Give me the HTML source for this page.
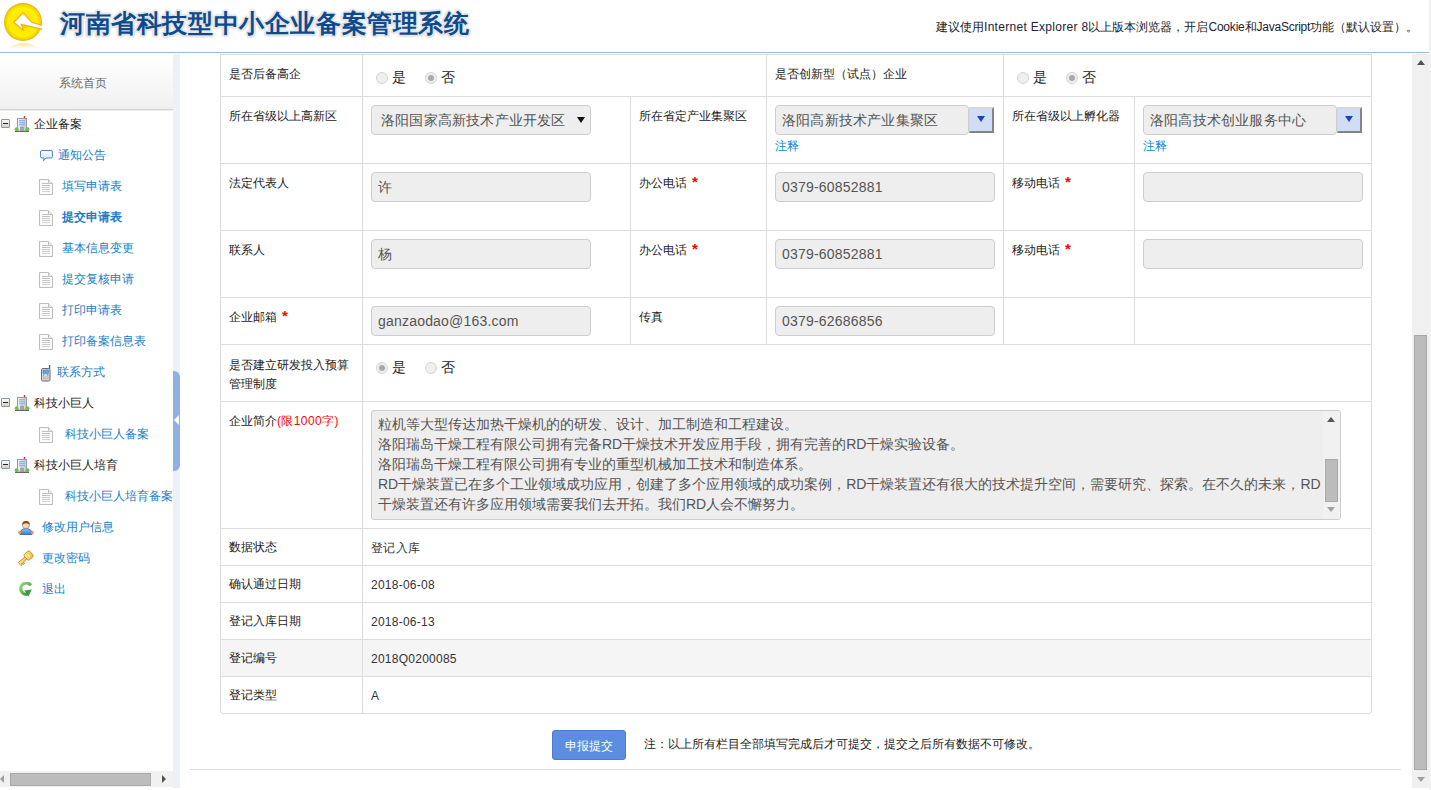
<!DOCTYPE html><html><head><meta charset="utf-8"><style>
*{margin:0;padding:0;box-sizing:border-box}
html,body{width:1431px;height:790px;overflow:hidden;background:#fff;font-family:"Liberation Sans",sans-serif;font-size:12px;color:#222}
.a{position:absolute;white-space:nowrap}
.hl{position:absolute;height:1px;background:#dcdcdc}
.vl{position:absolute;width:1px;background:#dcdcdc}
.lbl{position:absolute;white-space:nowrap;font-size:12px;color:#222;line-height:14px}
.inp{position:absolute;width:220px;height:30px;background:#eee;border:1px solid #cdcdcd;border-radius:4px;font-size:14px;color:#555;line-height:28px;padding-left:6px;white-space:nowrap;overflow:hidden;letter-spacing:.2px}
.req{color:#f00;margin-left:5px;font-size:15px;line-height:0;position:relative;top:0;font-weight:bold}
.radio{position:absolute;width:12px;height:12px;border-radius:50%;border:1px solid #d4d4d4;background:#efefef}
.radio.on:after{content:"";position:absolute;left:2px;top:2px;width:6px;height:6px;border-radius:50%;background:#a9a9a9}
.rt{position:absolute;font-size:14px;color:#222;line-height:14px;white-space:nowrap;margin-left:1px}
.ddb{position:absolute;width:25px;height:26px;background:#cfdef6;border-right:2px solid #858585;border-bottom:2px solid #858585;border-top:2px solid #d8d8d8;border-left:1px solid #d8d8d8}
.ddb:after{content:"";position:absolute;left:7px;top:7px;border-left:4px solid transparent;border-right:4px solid transparent;border-top:6px solid #1c44b4}
.note{position:absolute;color:#1a88cc;font-size:12px;line-height:14px;white-space:nowrap}
.nav{position:absolute;white-space:nowrap;color:#1a7ec8;font-size:12px;line-height:14px}
.tree{position:absolute;white-space:nowrap;color:#222;font-size:12px;line-height:14px}
.val{position:absolute;white-space:nowrap;font-size:12px;color:#333;line-height:14px;letter-spacing:.25px}
</style></head><body>
<svg class="a" style="left:0;top:0" width="52" height="52" viewBox="0 0 52 52">
<defs>
<radialGradient id="lg" cx="0.5" cy="0.5" r="0.5"><stop offset="0" stop-color="#f0b800"/><stop offset="0.45" stop-color="#ffe800"/><stop offset="0.75" stop-color="#fff000"/><stop offset="0.92" stop-color="#f2d000"/><stop offset="1" stop-color="#e0b000"/></radialGradient>
<linearGradient id="rf" x1="0" y1="0" x2="0" y2="1"><stop offset="0" stop-color="#f3e08a"/><stop offset="1" stop-color="#fffbe8"/></linearGradient>
</defs>
<path d="M9 48 Q23 38 38 48 Z" fill="url(#rf)" opacity="0.8"/>
<circle cx="23" cy="22" r="19" fill="url(#lg)"/>
<path d="M23 12.9 L31.7 22.3 L43 25.7 L43 29.4 L21.2 24.4 L23.7 30.6 L13.9 22.3 Z" fill="#fff" stroke="#f0a000" stroke-width="1.2" stroke-opacity="0.8"/>
<rect x="42.2" y="20" width="3" height="12" fill="#fff"/>
</svg>
<div class="a" style="left:60px;top:8px;font-size:25px;font-weight:bold;color:#0d4b90;line-height:30px;letter-spacing:0.6px;text-shadow:2px 0 1px #e6e6e6,-2px 0 1px #e6e6e6,0 2px 1px #e6e6e6,0 -2px 1px #e6e6e6,1.5px 1.5px 1px #e6e6e6,-1.5px -1.5px 1px #e6e6e6,1.5px -1.5px 1px #e6e6e6,-1.5px 1.5px 1px #e6e6e6">河南省科技型中小企业备案管理系统</div>
<div class="a" style="left:936px;top:20px;font-size:12px;color:#222;line-height:14px">建议使用<span style="letter-spacing:.3px;color:#223">Internet Explorer 8</span>以上版本浏览器，开启<span style="letter-spacing:-.2px;color:#223">Cookie</span>和<span style="letter-spacing:-.25px;color:#223">JavaScript</span>功能（默认设置）。</div>
<div class="a" style="left:0;top:52px;width:1431px;height:1px;background:#9dbde0"></div>
<div class="a" style="left:0;top:58px;width:173px;height:52px;background:linear-gradient(#ffffff,#f0f0f0);border-bottom:1px solid #d2d2d2;box-shadow:0 1px 0 #ececec"></div>
<div class="a" style="left:59px;top:76px;font-size:12px;color:#6a6a6a;line-height:14px">系统首页</div>
<div class="a" style="left:173px;top:54px;width:7px;height:734px;background:#edf0f5"></div>
<div class="a" style="left:173px;top:371px;width:7px;height:100px;background:#8eb0e2;border-radius:0 6px 6px 0"></div>
<div class="a" style="left:174px;top:415px;width:0;height:0;border-top:5px solid transparent;border-bottom:5px solid transparent;border-right:5px solid #fff"></div>
<div class="a" style="left:1px;top:119px;width:9px;height:9px;border:1px solid #7a9cc4;background:linear-gradient(#fbfaf6,#d8cfbe);border-radius:1px"><div class="a" style="left:1px;top:3px;width:5px;height:1px;background:#222"></div></div>
<svg class="a" style="left:14px;top:116px" width="16" height="16" viewBox="0 0 16 16">
<defs><linearGradient id="bg116" x1="0" x2="1"><stop offset="0" stop-color="#f4f4f4"/><stop offset="1" stop-color="#c8c8c8"/></linearGradient></defs>
<rect x="10" y="0.5" width="0.9" height="2.5" fill="#777"/><circle cx="10.5" cy="1" r="0.9" fill="#e22"/>
<rect x="3.5" y="2.5" width="9" height="12.5" fill="url(#bg116)" stroke="#9a9a9a"/>
<rect x="5" y="4.2" width="6" height="1.1" fill="#7eaee8"/><rect x="5" y="6.2" width="6" height="1.1" fill="#7eaee8"/><rect x="5" y="8.2" width="6" height="1.1" fill="#7eaee8"/>
<rect x="6.5" y="11" width="3" height="4" fill="#a8a8a8" stroke="#888" stroke-width="0.5"/>
<circle cx="2.6" cy="13.2" r="2" fill="#6cc050"/><circle cx="13.4" cy="13.2" r="2" fill="#6cc050"/>
<rect x="1" y="15" width="14" height="1" fill="#606860"/>
</svg>
<div class="tree" style="left:34px;top:117px">企业备案</div>
<svg class="a" style="left:40px;top:150px" width="13" height="12" viewBox="0 0 13 12"><defs><linearGradient id="sb" x1="0" y1="0" x2="0" y2="1"><stop offset="0" stop-color="#fff"/><stop offset="1" stop-color="#cfe0f8"/></linearGradient></defs><path d="M2 0.5 H11 Q12.5 0.5 12.5 2 V6.5 Q12.5 8 11 8 H6 L3.5 10.8 L4 8 H2 Q0.5 8 0.5 6.5 V2 Q0.5 0.5 2 0.5Z" fill="url(#sb)" stroke="#4f86c6"/></svg>
<div class="nav" style="left:58px;top:148px">通知公告</div>
<svg class="a" style="left:39px;top:179px" width="14" height="16" viewBox="0 0 14 16">
<path d="M0.5 0.5 H9.5 L13.5 4.5 V15.5 H0.5 Z" fill="#fafafa" stroke="#bdbdbd"/>
<path d="M9.5 0.5 V4.5 H13.5" fill="#eee" stroke="#bdbdbd"/>
<rect x="3" y="4" width="6" height="0.9" fill="#b8b8b8"/><rect x="3" y="6" width="8" height="0.9" fill="#b8b8b8"/><rect x="3" y="8" width="8" height="0.9" fill="#c4c4c4"/><rect x="3" y="10" width="8" height="0.9" fill="#c4c4c4"/><rect x="3" y="12" width="8" height="0.9" fill="#d0d0d0"/>
</svg>
<div class="nav" style="left:62px;top:179px;">填写申请表</div>
<svg class="a" style="left:39px;top:210px" width="14" height="16" viewBox="0 0 14 16">
<path d="M0.5 0.5 H9.5 L13.5 4.5 V15.5 H0.5 Z" fill="#fafafa" stroke="#bdbdbd"/>
<path d="M9.5 0.5 V4.5 H13.5" fill="#eee" stroke="#bdbdbd"/>
<rect x="3" y="4" width="6" height="0.9" fill="#b8b8b8"/><rect x="3" y="6" width="8" height="0.9" fill="#b8b8b8"/><rect x="3" y="8" width="8" height="0.9" fill="#c4c4c4"/><rect x="3" y="10" width="8" height="0.9" fill="#c4c4c4"/><rect x="3" y="12" width="8" height="0.9" fill="#d0d0d0"/>
</svg>
<div class="nav" style="left:62px;top:210px;font-weight:bold">提交申请表</div>
<svg class="a" style="left:39px;top:241px" width="14" height="16" viewBox="0 0 14 16">
<path d="M0.5 0.5 H9.5 L13.5 4.5 V15.5 H0.5 Z" fill="#fafafa" stroke="#bdbdbd"/>
<path d="M9.5 0.5 V4.5 H13.5" fill="#eee" stroke="#bdbdbd"/>
<rect x="3" y="4" width="6" height="0.9" fill="#b8b8b8"/><rect x="3" y="6" width="8" height="0.9" fill="#b8b8b8"/><rect x="3" y="8" width="8" height="0.9" fill="#c4c4c4"/><rect x="3" y="10" width="8" height="0.9" fill="#c4c4c4"/><rect x="3" y="12" width="8" height="0.9" fill="#d0d0d0"/>
</svg>
<div class="nav" style="left:62px;top:241px;">基本信息变更</div>
<svg class="a" style="left:39px;top:272px" width="14" height="16" viewBox="0 0 14 16">
<path d="M0.5 0.5 H9.5 L13.5 4.5 V15.5 H0.5 Z" fill="#fafafa" stroke="#bdbdbd"/>
<path d="M9.5 0.5 V4.5 H13.5" fill="#eee" stroke="#bdbdbd"/>
<rect x="3" y="4" width="6" height="0.9" fill="#b8b8b8"/><rect x="3" y="6" width="8" height="0.9" fill="#b8b8b8"/><rect x="3" y="8" width="8" height="0.9" fill="#c4c4c4"/><rect x="3" y="10" width="8" height="0.9" fill="#c4c4c4"/><rect x="3" y="12" width="8" height="0.9" fill="#d0d0d0"/>
</svg>
<div class="nav" style="left:62px;top:272px;">提交复核申请</div>
<svg class="a" style="left:39px;top:303px" width="14" height="16" viewBox="0 0 14 16">
<path d="M0.5 0.5 H9.5 L13.5 4.5 V15.5 H0.5 Z" fill="#fafafa" stroke="#bdbdbd"/>
<path d="M9.5 0.5 V4.5 H13.5" fill="#eee" stroke="#bdbdbd"/>
<rect x="3" y="4" width="6" height="0.9" fill="#b8b8b8"/><rect x="3" y="6" width="8" height="0.9" fill="#b8b8b8"/><rect x="3" y="8" width="8" height="0.9" fill="#c4c4c4"/><rect x="3" y="10" width="8" height="0.9" fill="#c4c4c4"/><rect x="3" y="12" width="8" height="0.9" fill="#d0d0d0"/>
</svg>
<div class="nav" style="left:62px;top:303px;">打印申请表</div>
<svg class="a" style="left:39px;top:334px" width="14" height="16" viewBox="0 0 14 16">
<path d="M0.5 0.5 H9.5 L13.5 4.5 V15.5 H0.5 Z" fill="#fafafa" stroke="#bdbdbd"/>
<path d="M9.5 0.5 V4.5 H13.5" fill="#eee" stroke="#bdbdbd"/>
<rect x="3" y="4" width="6" height="0.9" fill="#b8b8b8"/><rect x="3" y="6" width="8" height="0.9" fill="#b8b8b8"/><rect x="3" y="8" width="8" height="0.9" fill="#c4c4c4"/><rect x="3" y="10" width="8" height="0.9" fill="#c4c4c4"/><rect x="3" y="12" width="8" height="0.9" fill="#d0d0d0"/>
</svg>
<div class="nav" style="left:62px;top:334px;">打印备案信息表</div>
<svg class="a" style="left:41px;top:365px" width="10" height="17" viewBox="0 0 10 17"><rect x="8" y="0" width="1.2" height="4" fill="#555"/><rect x="0.5" y="3.5" width="8.5" height="12.5" rx="1.2" fill="#dcdcdc" stroke="#6a6a6a"/><rect x="2" y="5" width="5.5" height="3.5" fill="#5aa8f0" stroke="#3a70b0" stroke-width="0.5"/><rect x="2" y="9.5" width="1.5" height="1" fill="#4a4"/><rect x="6" y="9.5" width="1.5" height="1" fill="#e44"/><g fill="#999"><rect x="2" y="11.5" width="1.2" height="1"/><rect x="4.2" y="11.5" width="1.2" height="1"/><rect x="6.3" y="11.5" width="1.2" height="1"/><rect x="2" y="13.3" width="1.2" height="1"/><rect x="4.2" y="13.3" width="1.2" height="1"/><rect x="6.3" y="13.3" width="1.2" height="1"/></g></svg>
<div class="nav" style="left:57px;top:365px">联系方式</div>
<div class="a" style="left:1px;top:398px;width:9px;height:9px;border:1px solid #7a9cc4;background:linear-gradient(#fbfaf6,#d8cfbe);border-radius:1px"><div class="a" style="left:1px;top:3px;width:5px;height:1px;background:#222"></div></div>
<svg class="a" style="left:14px;top:395px" width="16" height="16" viewBox="0 0 16 16">
<defs><linearGradient id="bg395" x1="0" x2="1"><stop offset="0" stop-color="#f4f4f4"/><stop offset="1" stop-color="#c8c8c8"/></linearGradient></defs>
<rect x="10" y="0.5" width="0.9" height="2.5" fill="#777"/><circle cx="10.5" cy="1" r="0.9" fill="#e22"/>
<rect x="3.5" y="2.5" width="9" height="12.5" fill="url(#bg395)" stroke="#9a9a9a"/>
<rect x="5" y="4.2" width="6" height="1.1" fill="#7eaee8"/><rect x="5" y="6.2" width="6" height="1.1" fill="#7eaee8"/><rect x="5" y="8.2" width="6" height="1.1" fill="#7eaee8"/>
<rect x="6.5" y="11" width="3" height="4" fill="#a8a8a8" stroke="#888" stroke-width="0.5"/>
<circle cx="2.6" cy="13.2" r="2" fill="#6cc050"/><circle cx="13.4" cy="13.2" r="2" fill="#6cc050"/>
<rect x="1" y="15" width="14" height="1" fill="#606860"/>
</svg>
<div class="tree" style="left:34px;top:396px">科技小巨人</div>
<svg class="a" style="left:39px;top:427px" width="14" height="16" viewBox="0 0 14 16">
<path d="M0.5 0.5 H9.5 L13.5 4.5 V15.5 H0.5 Z" fill="#fafafa" stroke="#bdbdbd"/>
<path d="M9.5 0.5 V4.5 H13.5" fill="#eee" stroke="#bdbdbd"/>
<rect x="3" y="4" width="6" height="0.9" fill="#b8b8b8"/><rect x="3" y="6" width="8" height="0.9" fill="#b8b8b8"/><rect x="3" y="8" width="8" height="0.9" fill="#c4c4c4"/><rect x="3" y="10" width="8" height="0.9" fill="#c4c4c4"/><rect x="3" y="12" width="8" height="0.9" fill="#d0d0d0"/>
</svg>
<div class="nav" style="left:65px;top:427px">科技小巨人备案</div>
<div class="a" style="left:1px;top:460px;width:9px;height:9px;border:1px solid #7a9cc4;background:linear-gradient(#fbfaf6,#d8cfbe);border-radius:1px"><div class="a" style="left:1px;top:3px;width:5px;height:1px;background:#222"></div></div>
<svg class="a" style="left:14px;top:457px" width="16" height="16" viewBox="0 0 16 16">
<defs><linearGradient id="bg457" x1="0" x2="1"><stop offset="0" stop-color="#f4f4f4"/><stop offset="1" stop-color="#c8c8c8"/></linearGradient></defs>
<rect x="10" y="0.5" width="0.9" height="2.5" fill="#777"/><circle cx="10.5" cy="1" r="0.9" fill="#e22"/>
<rect x="3.5" y="2.5" width="9" height="12.5" fill="url(#bg457)" stroke="#9a9a9a"/>
<rect x="5" y="4.2" width="6" height="1.1" fill="#7eaee8"/><rect x="5" y="6.2" width="6" height="1.1" fill="#7eaee8"/><rect x="5" y="8.2" width="6" height="1.1" fill="#7eaee8"/>
<rect x="6.5" y="11" width="3" height="4" fill="#a8a8a8" stroke="#888" stroke-width="0.5"/>
<circle cx="2.6" cy="13.2" r="2" fill="#6cc050"/><circle cx="13.4" cy="13.2" r="2" fill="#6cc050"/>
<rect x="1" y="15" width="14" height="1" fill="#606860"/>
</svg>
<div class="tree" style="left:34px;top:458px">科技小巨人培育</div>
<svg class="a" style="left:39px;top:489px" width="14" height="16" viewBox="0 0 14 16">
<path d="M0.5 0.5 H9.5 L13.5 4.5 V15.5 H0.5 Z" fill="#fafafa" stroke="#bdbdbd"/>
<path d="M9.5 0.5 V4.5 H13.5" fill="#eee" stroke="#bdbdbd"/>
<rect x="3" y="4" width="6" height="0.9" fill="#b8b8b8"/><rect x="3" y="6" width="8" height="0.9" fill="#b8b8b8"/><rect x="3" y="8" width="8" height="0.9" fill="#c4c4c4"/><rect x="3" y="10" width="8" height="0.9" fill="#c4c4c4"/><rect x="3" y="12" width="8" height="0.9" fill="#d0d0d0"/>
</svg>
<div class="nav" style="left:65px;top:489px">科技小巨人培育备案</div>
<svg class="a" style="left:18px;top:520px" width="16" height="16" viewBox="0 0 16 16"><defs><linearGradient id="ub" x1="0" y1="0" x2="0" y2="1"><stop offset="0" stop-color="#8cc4ff"/><stop offset="1" stop-color="#2f7ae0"/></linearGradient></defs><path d="M2 14.5 Q2 8.5 8 8.5 Q14 8.5 14 14.5 Z" fill="url(#ub)" stroke="#2a5fb0" stroke-width="0.8"/><circle cx="1.9" cy="12.6" r="1.4" fill="#f0a860" stroke="#c07020" stroke-width="0.5"/><circle cx="14.1" cy="12.6" r="1.4" fill="#f0a860" stroke="#c07020" stroke-width="0.5"/><circle cx="8" cy="5" r="3.6" fill="#f7d7b8" stroke="#b07040" stroke-width="0.6"/><path d="M4.3 5 Q4 1 8 1 Q12 1 11.7 5 Q10.5 3.2 8 3.2 Q5.5 3.2 4.3 5Z" fill="#8a4a1a"/></svg>
<div class="nav" style="left:42px;top:520px">修改用户信息</div>
<svg class="a" style="left:17px;top:550px" width="17" height="17" viewBox="0 0 17 17"><defs><linearGradient id="kg" x1="0" y1="0" x2="1" y2="1"><stop offset="0" stop-color="#fff6b0"/><stop offset="1" stop-color="#e8b830"/></linearGradient></defs><g transform="rotate(-40 8.5 8.5)"><rect x="9" y="4.5" width="7.5" height="7.5" rx="1.8" fill="url(#kg)" stroke="#c88a20" stroke-width="0.9"/><rect x="11.5" y="6.3" width="2.5" height="4" rx="0.5" fill="#fff3b0" stroke="#d8a030" stroke-width="0.4"/><path d="M0.5 7 H9 V9.8 H4.5 V11.8 H3 V9.8 H2 V11 H0.5 Z" fill="url(#kg)" stroke="#c88a20" stroke-width="0.9"/></g></svg>
<div class="nav" style="left:42px;top:551px">更改密码</div>
<svg class="a" style="left:19px;top:582px" width="14" height="15" viewBox="0 0 14 15"><defs><linearGradient id="rg" x1="0" y1="0" x2="1" y2="1"><stop offset="0" stop-color="#9adc7a"/><stop offset="1" stop-color="#2e8a3a"/></linearGradient></defs><path d="M11.8 3.2 A5.6 5.6 0 1 0 9.5 11.8" fill="none" stroke="url(#rg)" stroke-width="3.2"/><path d="M5.5 8.5 L12.8 7.5 L9.5 14.5 Z" fill="#3a9a40"/><circle cx="7" cy="7" r="1.5" fill="#fff" opacity="0"/></svg>
<div class="nav" style="left:42px;top:582px">退出</div>
<div class="a" style="left:0;top:771px;width:173px;height:16px;background:#f1f1f1"></div>
<div class="a" style="left:10px;top:773px;width:141px;height:13px;background:#bcbcbc;border:1px solid #a8a8a8"></div>
<div class="a" style="left:0;top:775px;width:0;height:0;border-top:4px solid transparent;border-bottom:4px solid transparent;border-right:4px solid #a0a0a0"></div>
<div class="a" style="left:162px;top:775px;width:0;height:0;border-top:4px solid transparent;border-bottom:4px solid transparent;border-left:4px solid #505050"></div>
<div class="a" style="left:220px;top:639px;width:1151px;height:37px;background:#f5f5f5"></div>
<div class="hl" style="left:220px;top:54px;width:1152px"></div>
<div class="hl" style="left:220px;top:96px;width:1152px"></div>
<div class="hl" style="left:220px;top:163px;width:1152px"></div>
<div class="hl" style="left:220px;top:230px;width:1152px"></div>
<div class="hl" style="left:220px;top:297px;width:1152px"></div>
<div class="hl" style="left:220px;top:344px;width:1152px"></div>
<div class="hl" style="left:220px;top:401px;width:1152px"></div>
<div class="hl" style="left:220px;top:528px;width:1152px"></div>
<div class="hl" style="left:220px;top:565px;width:1152px"></div>
<div class="hl" style="left:220px;top:602px;width:1152px"></div>
<div class="hl" style="left:220px;top:639px;width:1152px"></div>
<div class="hl" style="left:220px;top:676px;width:1152px"></div>
<div class="a" style="left:220px;top:676px;width:1152px;height:38px;border:1px solid #dcdcdc;border-top:none;border-radius:0 0 4px 4px"></div>
<div class="vl" style="left:220px;top:54px;height:622px"></div>
<div class="vl" style="left:1371px;top:54px;height:622px"></div>
<div class="vl" style="left:362px;top:54px;height:659px"></div>
<div class="vl" style="left:630px;top:96px;height:248px"></div>
<div class="vl" style="left:766px;top:54px;height:290px"></div>
<div class="vl" style="left:1003px;top:54px;height:290px"></div>
<div class="vl" style="left:1134px;top:96px;height:248px"></div>
<div class="lbl" style="left:229px;top:67px">是否后备高企</div>
<div class="radio" style="left:376px;top:72px"></div><div class="rt" style="left:391px;top:70px">是</div>
<div class="radio on" style="left:425px;top:72px"></div><div class="rt" style="left:440px;top:70px">否</div>
<div class="lbl" style="left:775px;top:67px">是否创新型（试点）企业</div>
<div class="radio" style="left:1017px;top:72px"></div><div class="rt" style="left:1032px;top:70px">是</div>
<div class="radio on" style="left:1066px;top:72px"></div><div class="rt" style="left:1081px;top:70px">否</div>
<div class="lbl" style="left:229px;top:109px">所在省级以上高新区</div>
<div class="inp" style="left:371px;top:105px;padding-left:9px">洛阳国家高新技术产业开发区</div>
<div class="a" style="left:577px;top:117px;width:0;height:0;border-left:4px solid transparent;border-right:4px solid transparent;border-top:6px solid #111"></div>
<div class="lbl" style="left:639px;top:109px">所在省定产业集聚区</div>
<div class="inp" style="left:775px;top:105px;width:194px;border-radius:4px">洛阳高新技术产业集聚区</div>
<div class="ddb" style="left:969px;top:107px"></div>
<div class="note" style="left:775px;top:139px">注释</div>
<div class="lbl" style="left:1012px;top:109px">所在省级以上孵化器</div>
<div class="inp" style="left:1143px;top:105px;width:194px">洛阳高技术创业服务中心</div>
<div class="ddb" style="left:1337px;top:107px"></div>
<div class="note" style="left:1143px;top:139px">注释</div>
<div class="lbl" style="left:229px;top:176px">法定代表人</div>
<div class="inp" style="left:371px;top:172px">许</div>
<div class="lbl" style="left:639px;top:176px">办公电话<span class="req">*</span></div>
<div class="inp" style="left:775px;top:172px">0379-60852881</div>
<div class="lbl" style="left:1012px;top:176px">移动电话<span class="req">*</span></div>
<div class="inp" style="left:1143px;top:172px"></div>
<div class="lbl" style="left:229px;top:243px">联系人</div>
<div class="inp" style="left:371px;top:239px">杨</div>
<div class="lbl" style="left:639px;top:243px">办公电话<span class="req">*</span></div>
<div class="inp" style="left:775px;top:239px">0379-60852881</div>
<div class="lbl" style="left:1012px;top:243px">移动电话<span class="req">*</span></div>
<div class="inp" style="left:1143px;top:239px"></div>
<div class="lbl" style="left:229px;top:310px">企业邮箱<span class="req">*</span></div>
<div class="inp" style="left:371px;top:306px">ganzaodao@163.com</div>
<div class="lbl" style="left:639px;top:310px">传真</div>
<div class="inp" style="left:775px;top:306px">0379-62686856</div>
<div class="lbl" style="left:229px;top:356px;line-height:19px">是否建立研发投入预算<br>管理制度</div>
<div class="radio on" style="left:376px;top:362px"></div><div class="rt" style="left:391px;top:360px">是</div>
<div class="radio" style="left:425px;top:362px"></div><div class="rt" style="left:440px;top:360px">否</div>
<div class="lbl" style="left:229px;top:414px">企业简介<span style="color:#f00;letter-spacing:.4px">(限1000字)</span></div>
<div class="a" style="left:371px;top:410px;width:970px;height:110px;background:#eee;border:1px solid #cdcdcd;border-radius:3px;overflow:hidden">
<div class="a" style="left:6px;top:3px;font-size:14px;line-height:20px;color:#555">粒机等大型传达加热干燥机的的研发、设计、加工制造和工程建设。<br>洛阳瑞岛干燥工程有限公司拥有完备RD干燥技术开发应用手段，拥有完善的RD干燥实验设备。<br>洛阳瑞岛干燥工程有限公司拥有专业的重型机械加工技术和制造体系。<br>RD干燥装置已在多个工业领域成功应用，创建了多个应用领域的成功案例，RD干燥装置还有很大的技术提升空间，需要研究、探索。在不久的未来，RD<br>干燥装置还有许多应用领域需要我们去开拓。我们RD人会不懈努力。</div>
<div class="a" style="left:951px;top:0;width:17px;height:108px;background:#f1f1f1"></div>
<div class="a" style="left:955px;top:6px;width:0;height:0;border-left:4px solid transparent;border-right:4px solid transparent;border-bottom:5px solid #555"></div>
<div class="a" style="left:953px;top:48px;width:13px;height:43px;background:#bcbcbc;border:1px solid #a9a9a9"></div>
<div class="a" style="left:955px;top:96px;width:0;height:0;border-left:4px solid transparent;border-right:4px solid transparent;border-top:5px solid #a0a0a0"></div>
</div>
<div class="lbl" style="left:229px;top:540px">数据状态</div>
<div class="val" style="left:371px;top:541px">登记入库</div>
<div class="lbl" style="left:229px;top:577px">确认通过日期</div>
<div class="val" style="left:371px;top:578px">2018-06-08</div>
<div class="lbl" style="left:229px;top:614px">登记入库日期</div>
<div class="val" style="left:371px;top:615px">2018-06-13</div>
<div class="lbl" style="left:229px;top:651px">登记编号</div>
<div class="val" style="left:371px;top:652px">2018Q0200085</div>
<div class="lbl" style="left:229px;top:688px">登记类型</div>
<div class="val" style="left:371px;top:689px">A</div>
<div class="a" style="left:552px;top:730px;width:74px;height:30px;background:#5b8de0;border:1px solid #4a7cd0;border-radius:3px;color:#fff;font-size:12px;line-height:30px;text-align:center">申报提交</div>
<div class="a" style="left:644px;top:737px;font-size:12px;color:#222;line-height:14px">注：以上所有栏目全部填写完成后才可提交，提交之后所有数据不可修改。</div>
<div class="a" style="left:190px;top:769px;width:1211px;height:1px;background:#ddd"></div>
<div class="a" style="left:1412px;top:54px;width:17px;height:734px;background:#f0f0f0"></div>
<div class="a" style="left:1429px;top:0;width:2px;height:790px;background:#f2f2f2"></div>
<div class="a" style="left:1417px;top:60px;width:0;height:0;border-left:4px solid transparent;border-right:4px solid transparent;border-bottom:5px solid #505050"></div>
<div class="a" style="left:1414px;top:335px;width:13px;height:435px;background:#bcbcbc;border:1px solid #a8a8a8"></div>
<div class="a" style="left:1417px;top:777px;width:0;height:0;border-left:4px solid transparent;border-right:4px solid transparent;border-top:5px solid #a0a0a0"></div>
</body></html>
